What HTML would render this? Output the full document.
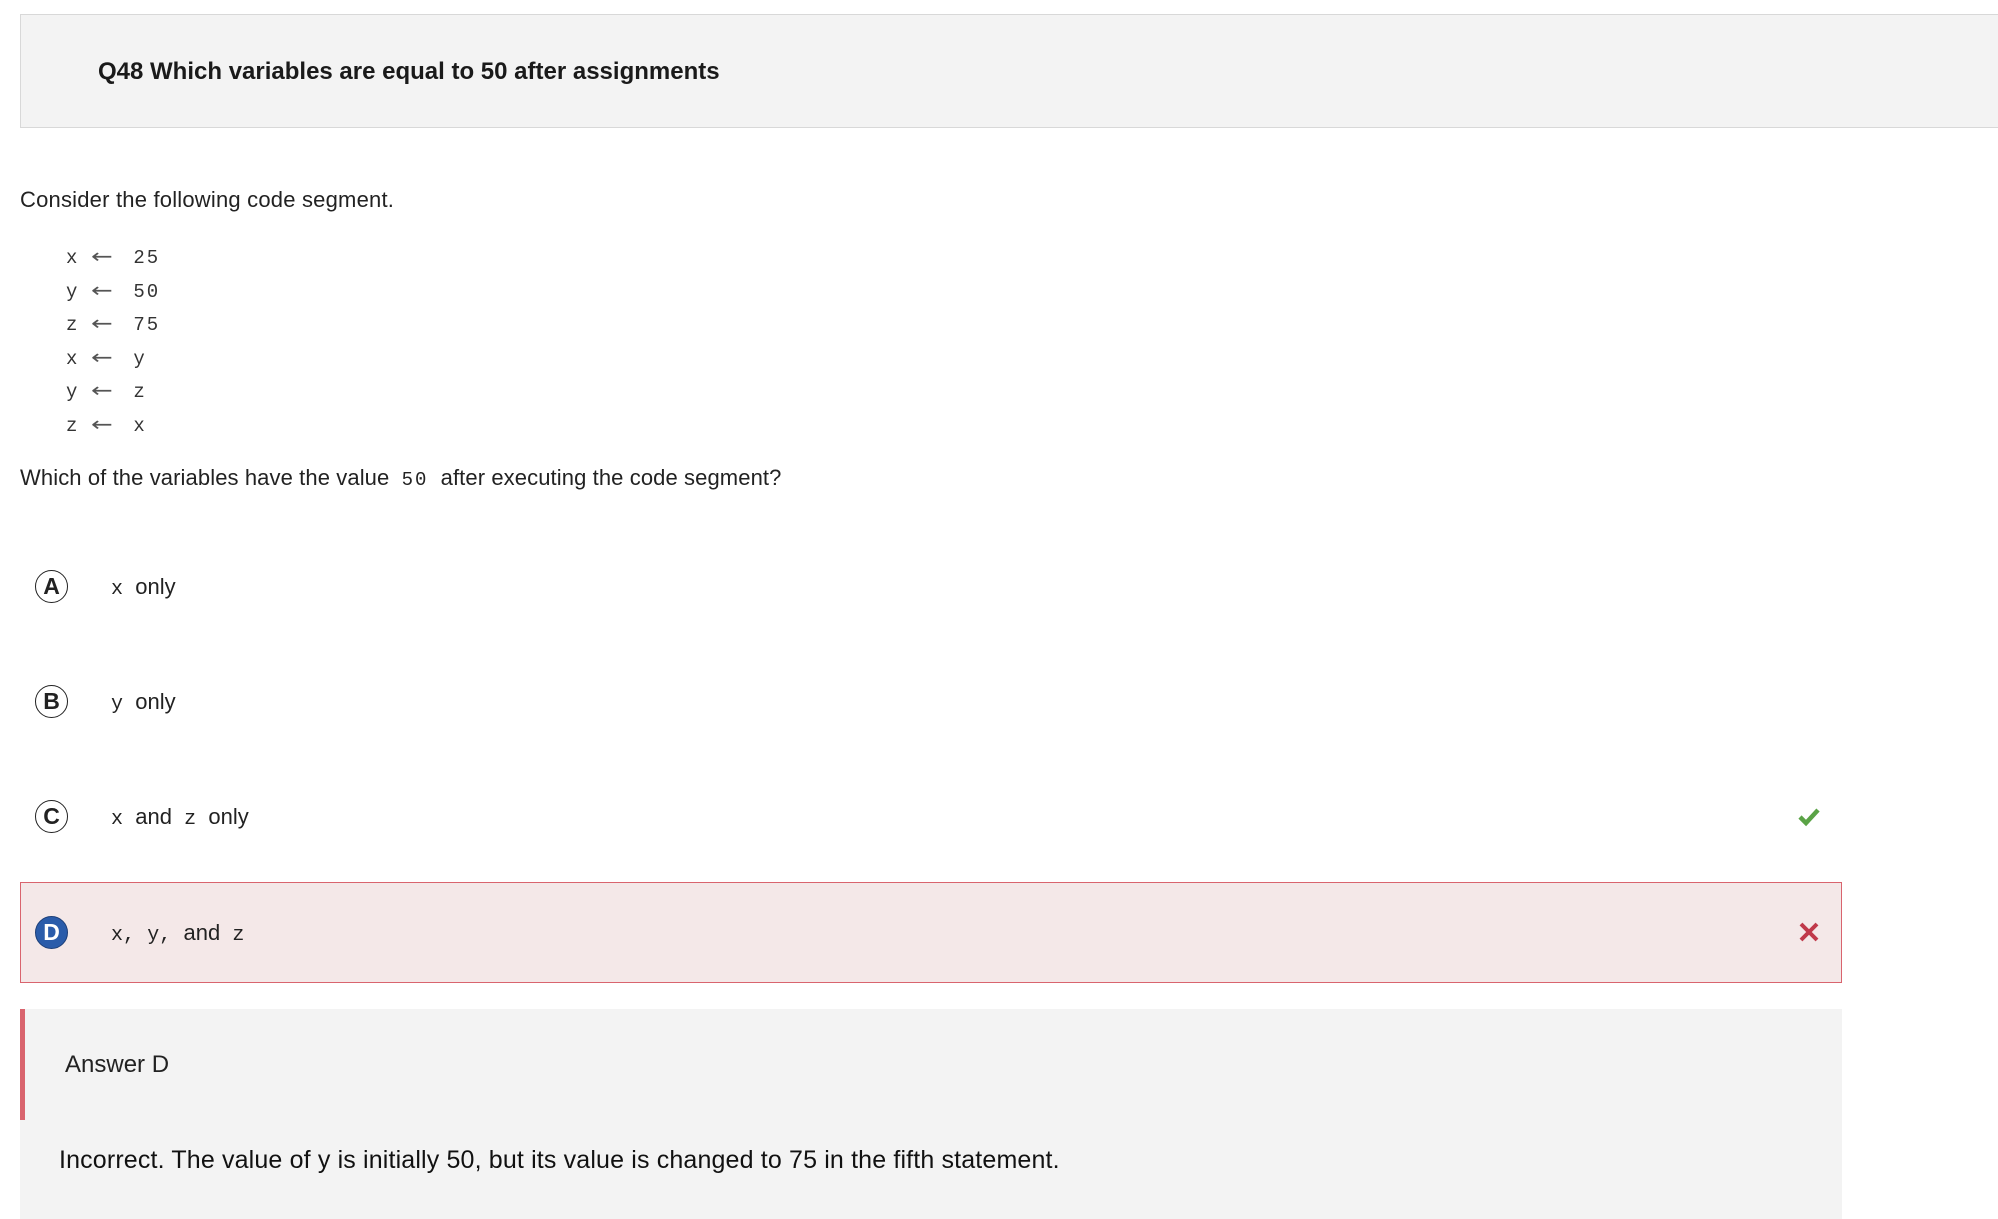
<!DOCTYPE html>
<html><head><meta charset="utf-8"><style>
body{margin:0;width:1998px;height:1214px;background:#fff;position:relative;overflow:hidden;font-family:"Liberation Sans",sans-serif;color:#222}
.a{position:absolute;white-space:nowrap}
.m{font-family:"Liberation Mono",monospace}
.c{position:absolute;width:33px;height:33px;border:1.5px solid #222;border-radius:50%;box-sizing:border-box;text-align:center;line-height:31px;font-weight:bold;font-size:23px;color:#222}
.t{font-size:22px;line-height:26px}
.code div{height:33.5px}
.ar{display:inline-block;width:26px;margin:0 16px 0 12px;font-family:"DejaVu Sans",sans-serif;font-size:20px;color:#555;transform:scaleX(1.3);transform-origin:left}
</style></head><body>
<div class="a" style="left:20px;top:14px;width:1990px;height:114px;background:#f3f3f3;border:1px solid #d8d8d8;box-sizing:border-box"></div>
<div class="a" style="left:98px;top:57px;font-size:24px;font-weight:bold;line-height:30px;color:#1a1a1a">Q48 Which variables are equal to 50 after assignments</div>
<div class="a t" style="left:20px;top:187px;letter-spacing:0.2px">Consider the following code segment.</div>
<div class="a m code" style="left:66px;top:240px;font-size:19px;line-height:33.5px;color:#333;letter-spacing:2px">
<div>x<span class="ar">←</span>25</div>
<div>y<span class="ar">←</span>50</div>
<div>z<span class="ar">←</span>75</div>
<div>x<span class="ar">←</span>y</div>
<div>y<span class="ar">←</span>z</div>
<div>z<span class="ar">←</span>x</div>
</div>
<div class="a t" style="left:20px;top:465px;letter-spacing:0.1px">Which of the variables have the value <span class="m" style="font-size:19px;padding:0 6px;letter-spacing:2px">50</span> after executing the code segment?</div>

<div class="c" style="left:35px;top:570px">A</div>
<div class="a t" style="left:111px;top:574px"><span class="m" style="font-size:20px">x</span>&nbsp; only</div>
<div class="c" style="left:35px;top:685px">B</div>
<div class="a t" style="left:111px;top:689px"><span class="m" style="font-size:20px">y</span>&nbsp; only</div>
<div class="c" style="left:35px;top:800px">C</div>
<div class="a t" style="left:111px;top:804px"><span class="m" style="font-size:20px">x</span>&nbsp; and &nbsp;<span class="m" style="font-size:20px">z</span>&nbsp; only</div>
<svg class="a" style="left:1797px;top:806px" width="24" height="22" viewBox="0 0 24 22"><path d="M3 11 L9 17 L21 4" stroke="#5aa346" stroke-width="4.5" fill="none"/></svg>

<div class="a" style="left:20px;top:882px;width:1822px;height:101px;background:#f4e8e8;border:1.5px solid #d9646e;box-sizing:border-box"></div>
<div class="c" style="left:35px;top:916px;background:#2a5caa;border-color:#1d3f78;color:#fff">D</div>
<div class="a t" style="left:111px;top:920px"><span class="m" style="font-size:20px">x,</span>&nbsp; <span class="m" style="font-size:20px">y,</span>&nbsp; and &nbsp;<span class="m" style="font-size:20px">z</span></div>
<svg class="a" style="left:1798px;top:921px" width="22" height="22" viewBox="0 0 22 22"><path d="M3 3 L19 19 M19 3 L3 19" stroke="#c0394a" stroke-width="4" fill="none"/></svg>

<div class="a" style="left:20px;top:1009px;width:1822px;height:210px;background:#f3f3f3"></div>
<div class="a" style="left:20px;top:1009px;width:5px;height:111px;background:#d9646e"></div>
<div class="a" style="left:65px;top:1050px;font-size:24px;line-height:30px">Answer D</div>
<div class="a" style="left:59px;top:1145px;font-size:25px;line-height:30px;color:#111;letter-spacing:0.15px">Incorrect. The value of y is initially 50, but its value is changed to 75 in the fifth statement.</div>
</body></html>
